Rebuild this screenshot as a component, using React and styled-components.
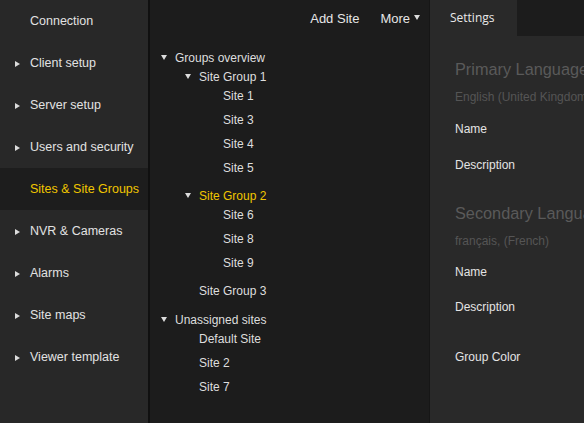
import React from "react";
import styled, { createGlobalStyle } from "styled-components";

const Global = createGlobalStyle`
  html, body { margin: 0; padding: 0; background: #282828; }
  body { font-family: "Liberation Sans", Arial, sans-serif; }
  * { box-sizing: border-box; }
`;

const Shell = styled.div`
  display: flex;
  width: 584px;
  height: 423px;
  overflow: hidden;
  background: #282828;
`;

const Sidebar = styled.nav`
  width: 150px;
  flex: none;
  background: #282828;
  border-right: 2px solid #101010;
  display: flex;
  flex-direction: column;
`;

const NavItem = styled.div`
  height: 42px;
  display: flex;
  align-items: center;
  padding-left: 15px;
  font-size: 12.5px;
  color: ${(p) => (p.$active ? "#f0c600" : "#e2e2e2")};
  background: ${(p) => (p.$active ? "#1d1d1d" : "transparent")};
  white-space: nowrap;
`;

const RightArrow = styled.span`
  width: 15px;
  flex: none;
  display: flex;
  align-items: center;
  &::before {
    content: "";
    display: ${(p) => (p.$show ? "block" : "none")};
    width: 0;
    height: 0;
    border-left: 5px solid #dcdcdc;
    border-top: 3px solid transparent;
    border-bottom: 3px solid transparent;
    margin-top: 1px;
  }
`;

const Middle = styled.section`
  width: 280px;
  flex: none;
  background: #1c1c1c;
  border-right: 1px solid #161616;
  display: flex;
  flex-direction: column;
`;

const Toolbar = styled.div`
  height: 36px;
  display: flex;
  align-items: center;
  justify-content: flex-end;
  gap: 21px;
  padding-right: 9px;
  font-size: 13px;
  color: #e6e6e6;
`;

const ToolButton = styled.span`
  display: flex;
  align-items: center;
  gap: 4px;
`;

const DownCaret = styled.span`
  width: 0;
  height: 0;
  border-top: 5px solid #dcdcdc;
  border-left: 3px solid transparent;
  border-right: 3px solid transparent;
  margin-top: -1px;
`;

const Tree = styled.div`
  display: flex;
  flex-direction: column;
  padding-top: 13px;
`;

const TreeRow = styled.div`
  display: flex;
  align-items: flex-start;
  padding-left: ${(p) => 11 + p.$level * 24}px;
  padding-bottom: ${(p) => (p.$leaf ? 5 : 0)}px;
  margin-top: ${(p) => p.$space || 0}px;
  font-size: 12px;
  line-height: 19px;
  color: ${(p) => (p.$active ? "#f0c600" : "#dedede")};
  white-space: nowrap;
`;

const Toggle = styled.span`
  width: 14px;
  height: 19px;
  flex: none;
  display: flex;
  align-items: flex-start;
  &::before {
    content: "";
    display: ${(p) => (p.$show ? "block" : "none")};
    margin-top: 6px;
    width: 0;
    height: 0;
    border-top: 5px solid #dcdcdc;
    border-left: 3px solid transparent;
    border-right: 3px solid transparent;
  }
`;

const Panel = styled.section`
  flex: 1;
  background: #292929;
  display: flex;
  flex-direction: column;
  min-width: 0;
`;

const TabBar = styled.div`
  height: 36px;
  display: flex;
  background: #1c1c1c;
`;

const Tab = styled.div`
  width: 87px;
  background: #292929;
  display: flex;
  align-items: center;
  padding-left: 20px;
  padding-bottom: 2px;
  font-family: "Open Sans", "Liberation Sans", sans-serif;
  font-size: 12px;
  color: #e8e8e8;
`;

const Content = styled.div`
  padding-left: 25px;
  display: flex;
  flex-direction: column;
  white-space: nowrap;
`;

const Heading = styled.div`
  height: 20px;
  line-height: 20px;
  margin-top: ${(p) => p.$mt}px;
  font-size: 16.3px;
  color: #5a5a5a;
`;

const SubText = styled.div`
  height: 14px;
  line-height: 14px;
  margin-top: 11px;
  margin-bottom: ${(p) => p.$mb}px;
  font-size: 12px;
  color: #555555;
`;

const Field = styled.div`
  height: ${(p) => p.$h || 36}px;
  line-height: 16px;
  margin-top: ${(p) => p.$mt || 0}px;
  font-size: 12px;
  color: #e4e4e4;
`;

const navItems = [
  { label: "Connection", arrow: false },
  { label: "Client setup", arrow: true },
  { label: "Server setup", arrow: true },
  { label: "Users and security", arrow: true },
  { label: "Sites & Site Groups", arrow: false, active: true },
  { label: "NVR & Cameras", arrow: true },
  { label: "Alarms", arrow: true },
  { label: "Site maps", arrow: true },
  { label: "Viewer template", arrow: true },
];

const tree = [
  {
    label: "Groups overview",
    children: [
      { label: "Site Group 1", children: ["Site 1", "Site 3", "Site 4", "Site 5"] },
      { label: "Site Group 2", active: true, space: 4, children: ["Site 6", "Site 8", "Site 9"] },
      { label: "Site Group 3", space: 4, children: [] },
    ],
  },
  {
    label: "Unassigned sites",
    space: 10,
    leaves: ["Default Site", "Site 2", "Site 7"],
  },
];

function renderTree() {
  const rows = [];
  tree.forEach((top) => {
    rows.push(
      <TreeRow key={top.label} $level={0} $space={top.space}>
        <Toggle $show />
        {top.label}
      </TreeRow>
    );
    (top.children || []).forEach((g) => {
      rows.push(
        <TreeRow key={g.label} $level={1} $space={g.space} $active={g.active}>
          <Toggle $show={g.children.length > 0} />
          {g.label}
        </TreeRow>
      );
      g.children.forEach((s) => {
        rows.push(
          <TreeRow key={s} $level={2} $leaf>
            <Toggle />
            {s}
          </TreeRow>
        );
      });
    });
    (top.leaves || []).forEach((s) => {
      rows.push(
        <TreeRow key={s} $level={1} $leaf>
          <Toggle />
          {s}
        </TreeRow>
      );
    });
  });
  return rows;
}

export default function App() {
  return (
    <>
      <Global />
      <Shell>
        <Sidebar>
          {navItems.map((n) => (
            <NavItem key={n.label} $active={n.active}>
              <RightArrow $show={n.arrow} />
              {n.label}
            </NavItem>
          ))}
        </Sidebar>
        <Middle>
          <Toolbar>
            <ToolButton>Add Site</ToolButton>
            <ToolButton>
              More <DownCaret />
            </ToolButton>
          </Toolbar>
          <Tree>{renderTree()}</Tree>
        </Middle>
        <Panel>
          <TabBar>
            <Tab>Settings</Tab>
          </TabBar>
          <Content>
            <Heading $mt={23}>Primary Language</Heading>
            <SubText $mb={17}>English (United Kingdom)</SubText>
            <Field>Name</Field>
            <Field>Description</Field>
            <Heading $mt={10}>Secondary Language</Heading>
            <SubText $mb={16}>français, (French)</SubText>
            <Field $h={35}>Name</Field>
            <Field>Description</Field>
            <Field $mt={14}>Group Color</Field>
          </Content>
        </Panel>
      </Shell>
    </>
  );
}
